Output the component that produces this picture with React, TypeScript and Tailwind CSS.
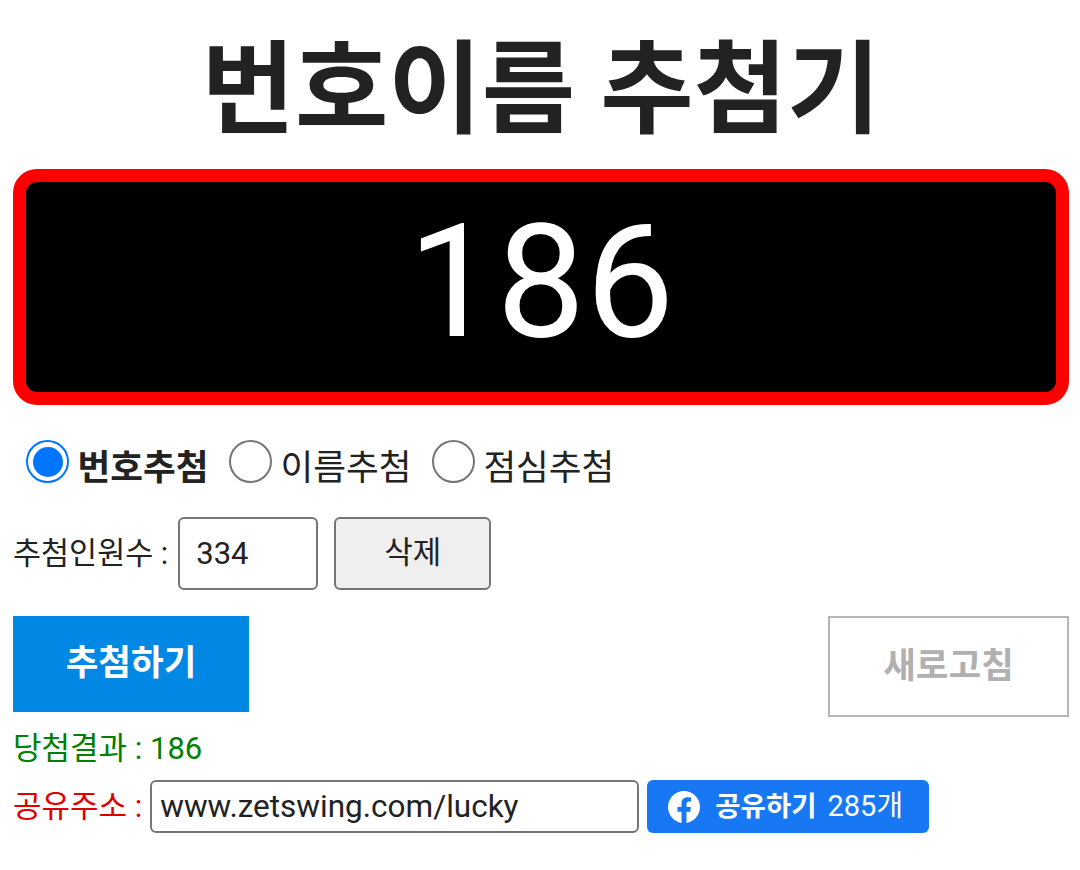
import { useState } from "react";

const font = "font-['Roboto','Noto_Sans_CJK_KR',sans-serif]";

function Radio({ checked, label }: { checked?: boolean; label: string }) {
  return (
    <label className="flex items-start">
      {checked ? (
        <span className="w-[43px] h-[43px] rounded-full border-[2.5px] border-[#0075ff] flex items-center justify-center bg-white">
          <span className="w-[30px] h-[30px] rounded-full bg-[#0075ff]" />
        </span>
      ) : (
        <span className="w-[43px] h-[43px] rounded-full border-[2.5px] border-[#767676] bg-white" />
      )}
      <span className={`ml-[8.5px] mt-[3px] text-[35.6px] leading-[50px] text-[#222] ${checked ? "font-bold" : ""}`}>{label}</span>
    </label>
  );
}

export default function App() {
  const [count, setCount] = useState("334");
  const [url, setUrl] = useState("www.zetswing.com/lucky");

  return (
    <div className={`${font} w-[1080px] h-[870px] bg-white pl-[13px] pr-[11px] text-[#222] overflow-hidden`}>
      <h1 className="text-center font-bold text-[101.5px] pt-[13px] leading-[156px] text-[#222]">번호이름 추첨기</h1>

      <div className="h-[236px] rounded-[24px] border-[13px] border-[#ff0000] bg-black flex items-center justify-center pb-[10px] text-white text-[158px] leading-none">
        186
      </div>

      <div className="flex items-start gap-[20.5px] pl-[13px] mt-[35px] h-[53px]">
        <Radio checked label="번호추첨" />
        <Radio label="이름추첨" />
        <Radio label="점심추첨" />
      </div>

      <div className="flex items-center mt-[24px]">
        <span className="text-[30.5px]">추첨인원수 :</span>
        <input
          value={count}
          onChange={(e) => setCount(e.target.value)}
          className="ml-[10px] w-[140px] h-[73px] border-2 border-[#767676] rounded-[6px] px-[16px] text-[31px] bg-white"
        />
        <button className="ml-[16px] w-[157px] h-[73px] border-2 border-[#767676] rounded-[6px] bg-[#efefef] text-[31px]">
          삭제
        </button>
      </div>

      <div className="flex items-start justify-between mt-[26px]">
        <button className="w-[236px] h-[96px] bg-[#0088e4] text-white font-bold text-[35.5px]">추첨하기</button>
        <button className="w-[241px] h-[101px] border-2 border-[#b5b5b5] bg-white text-[#b0b0b0] font-bold text-[35.5px]">
          새로고침
        </button>
      </div>

      <div className="text-[31px] leading-[44px] text-[#008000] mt-[10px]">당첨결과 : 186</div>

      <div className="flex items-center mt-[9px]">
        <span className="text-[31px] leading-[44px] text-[#e00000]">공유주소 :</span>
        <input
          value={url}
          onChange={(e) => setUrl(e.target.value)}
          className="ml-[8px] w-[489px] h-[53px] border-2 border-[#767676] rounded-[6px] px-[8px] text-[31.5px] bg-white"
        />
        <button className="ml-[8px] w-[282px] h-[53px] rounded-[6px] bg-[#1877f2] text-white flex items-center pl-[21px]">
          <svg viewBox="0 0 24 24" className="w-[32px] h-[32px]" fill="#fff">
            <path d="M24 12.07C24 5.4 18.63 0 12 0S0 5.4 0 12.07c0 6.03 4.39 11.02 10.13 11.93v-8.44H7.08v-3.49h3.05V9.41c0-3.02 1.79-4.69 4.53-4.69 1.31 0 2.69.24 2.69.24v2.97h-1.51c-1.49 0-1.96.93-1.96 1.88v2.26h3.33l-.53 3.49h-2.8V24C19.61 23.09 24 18.1 24 12.07z" />
          </svg>
          <span className="ml-[15px] font-bold text-[27.5px]">공유하기</span>
          <span className="ml-[11px] text-[29px]">285개</span>
        </button>
      </div>
    </div>
  );
}
